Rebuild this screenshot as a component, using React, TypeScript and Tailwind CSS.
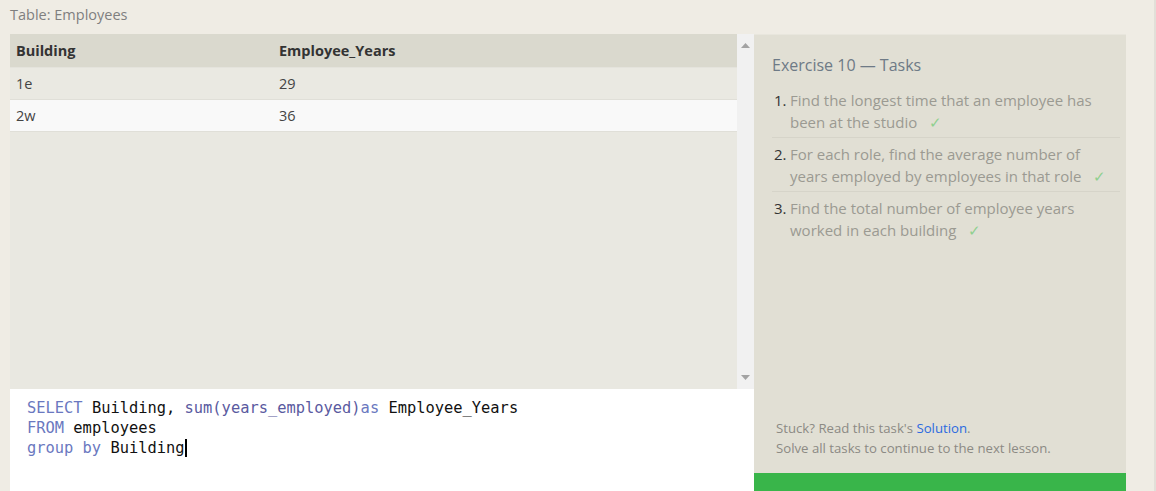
import { useState } from 'react'

type Row = { building: string; years: number }

const ROWS: Row[] = [
  { building: '1e', years: 29 },
  { building: '2w', years: 36 },
]

const TASKS: { lines: string[] }[] = [
  { lines: ['Find the longest time that an employee has', 'been at the studio'] },
  { lines: ['For each role, find the average number of', 'years employed by employees in that role'] },
  { lines: ['Find the total number of employee years', 'worked in each building'] },
]

const sans = "font-['Open_Sans','Noto_Sans',sans-serif]"

function Scrollbar() {
  return (
    <div className="w-[17px] bg-[#f1f1f1] flex flex-col justify-between items-center py-[9px]">
      <svg width="9" height="5" viewBox="0 0 9 5">
        <path d="M4.5 0 L9 5 L0 5 Z" fill="#a3a3a3" />
      </svg>
      <svg width="9" height="5" viewBox="0 0 9 5">
        <path d="M0 0 L9 0 L4.5 5 Z" fill="#a3a3a3" />
      </svg>
    </div>
  )
}

function ResultsTable() {
  return (
    <div className="flex h-[355px]">
      <div className="flex-1 bg-[#e9e8e1]">
        <div className="flex h-[34px] items-center bg-[#dad9ce] border-b border-[#e4e3dc] text-[14.5px] font-bold text-[#333]">
          <div className="w-[269px] pl-[6px]">Building</div>
          <div className="flex-1">Employee_Years</div>
        </div>
        {ROWS.map((r, i) => (
          <div
            key={r.building}
            className={
              'flex h-[32px] items-center text-[14.5px] text-[#444] border-b border-[#e0dfd8] ' +
              (i % 2 === 0 ? 'bg-[#eae9e2]' : 'bg-[#f9f9f9]')
            }
          >
            <div className="w-[269px] pl-[6px]">{r.building}</div>
            <div className="flex-1">{r.years}</div>
          </div>
        ))}
      </div>
      <Scrollbar />
    </div>
  )
}

function Editor() {
  const kw = 'text-[#6a78c0]'
  const fn = 'text-[#5a5aa0]'
  return (
    <div className="flex-1 bg-white pl-[17px] pt-[9px] font-['DejaVu_Sans_Mono','Liberation_Mono',monospace] text-[15.4px] leading-[20px] text-[#111]">
      <div className="whitespace-pre">
        <span className={kw}>SELECT</span> Building, <span className={fn}>sum(years_employed)</span>
        <span className={kw}>as</span> Employee_Years
      </div>
      <div className="whitespace-pre">
        <span className={kw}>FROM</span> employees
      </div>
      <div className="whitespace-pre flex items-center">
        <span className={kw}>group by</span>&nbsp;Building
        <span className="inline-block w-[2px] h-[18px] bg-black" />
      </div>
    </div>
  )
}

function TaskPanel() {
  const [done] = useState(true)
  return (
    <div className="w-[372px] flex flex-col bg-[#e1dfd4] border-t border-[#e8e6dd]">
      <div className="flex-1 pl-[18px] pr-[6px] pt-[19px]">
        <div className="text-[16px] text-[#6e7a86] leading-[22px]">Exercise 10 — Tasks</div>
        <ol className="mt-[13px]">
          {TASKS.map((t, i) => (
            <li
              key={i}
              className={
                'flex text-[15px] leading-[22px] pb-[4px] mb-[5px] ' +
                (i < TASKS.length - 1 ? 'border-b border-[#d6d4c9]' : '')
              }
            >
              <span className="w-[17px] text-[#333] pl-[2px]">{i + 1}.</span>
              <span className="text-[#9b9a92] pl-[1px]">
                {t.lines[0]}
                <br />
                {t.lines[1]}
                {done && <span className="ml-[12px] text-[#8fd08f]">✓</span>}
              </span>
            </li>
          ))}
        </ol>
      </div>
      <div className="pl-[22px] pb-[15px] text-[13.2px] leading-[20px] text-[#8c8a84]">
        <div>
          Stuck? Read this task's <span className="text-[#2b6ae0]">Solution</span>.
        </div>
        <div>Solve all tasks to continue to the next lesson.</div>
      </div>
      <div className="h-[18px] bg-[#39b54a]" />
    </div>
  )
}

export default function App() {
  return (
    <div className={`h-[491px] w-[1156px] overflow-hidden bg-[#efece4] flex ${sans}`}>
      <div className="flex-1 flex flex-col pl-[10px]">
        <div className="h-[34px] pt-[4px] text-[14.5px] text-[#7f7f7f]">Table: Employees</div>
        <div className="flex flex-1">
          <div className="w-[744px] flex flex-col">
            <ResultsTable />
            <Editor />
          </div>
          <TaskPanel />
        </div>
      </div>
      <div className="w-[2px] bg-[#e2dfd8]" />
    </div>
  )
}
